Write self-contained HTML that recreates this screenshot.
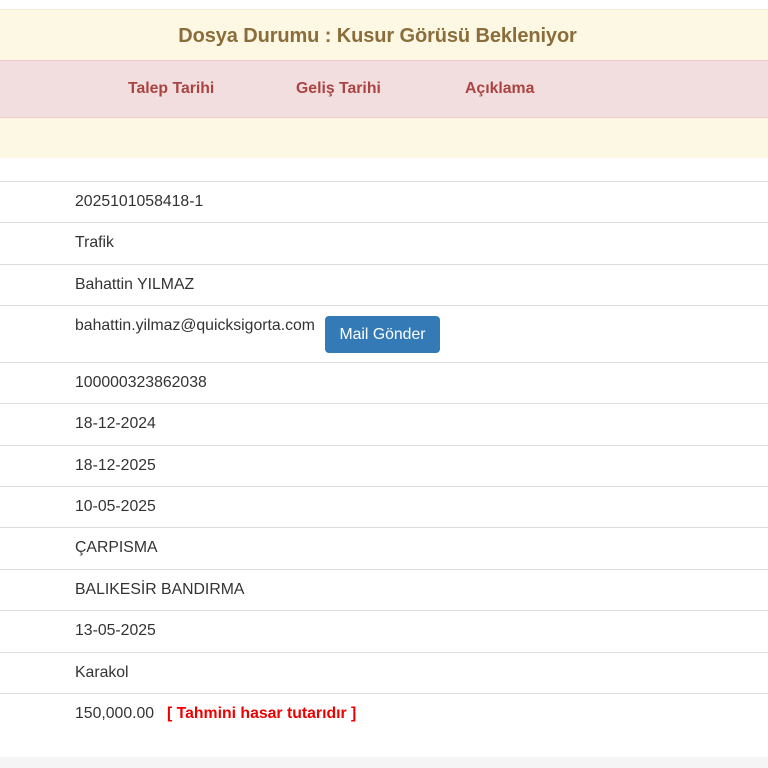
<!DOCTYPE html>
<html><head><meta charset="utf-8"><style>
body{margin:0;width:768px;height:768px;background:#fff;font-family:"Liberation Sans",Arial,sans-serif;position:relative;overflow:hidden;color:#333}
.a{position:absolute;left:0;width:768px}
.t{position:absolute;font-size:15.8px;white-space:nowrap}
.line{position:absolute;left:0;width:768px;height:1px;background:#ddd}
</style></head><body>
<div class="a" style="top:9px;height:51px;background:#fcf8e3;border-top:1px solid #f5eedc;box-sizing:border-box"></div>
<div class="t" style="left:0;width:755px;text-align:center;top:25px;font-size:20px;letter-spacing:-0.1px;font-weight:bold;color:#8a6d3b">Dosya Durumu : Kusur Görüsü Bekleniyor</div>
<div class="a" style="top:60px;height:58px;background:#f2dede;border-top:1px solid #ebccd1;border-bottom:1px solid #ebccd1;box-sizing:border-box"></div>
<div class="t" style="left:128px;top:80px;font-weight:bold;color:#a94442">Talep Tarihi</div>
<div class="t" style="left:296px;top:80px;font-weight:bold;color:#a94442">Geliş Tarihi</div>
<div class="t" style="left:465px;top:80px;font-weight:bold;color:#a94442">Açıklama</div>
<div class="a" style="top:118px;height:40px;background:#fcf8e3"></div>
<div class="line" style="top:181px"></div>
<div class="line" style="top:222px"></div>
<div class="line" style="top:264px"></div>
<div class="line" style="top:305px"></div>
<div class="line" style="top:362px"></div>
<div class="line" style="top:403px"></div>
<div class="line" style="top:445px"></div>
<div class="line" style="top:486px"></div>
<div class="line" style="top:527px"></div>
<div class="line" style="top:569px"></div>
<div class="line" style="top:610px"></div>
<div class="line" style="top:652px"></div>
<div class="line" style="top:693px"></div>
<div class="t" style="left:75px;top:193px">2025101058418-1</div>
<div class="t" style="left:75px;top:234px">Trafik</div>
<div class="t" style="left:75px;top:276px">Bahattin YILMAZ</div>
<div class="t" style="left:75px;top:317px">bahattin.yilmaz@quicksigorta.com</div>
<div style="position:absolute;left:325px;top:316px;width:115px;height:37px;background:#337ab7;border-radius:4px;color:#fff;font-size:15.8px;line-height:37px;text-align:center">Mail Gönder</div>
<div class="t" style="left:75px;top:374px">100000323862038</div>
<div class="t" style="left:75px;top:415px">18-12-2024</div>
<div class="t" style="left:75px;top:457px">18-12-2025</div>
<div class="t" style="left:75px;top:498px">10-05-2025</div>
<div class="t" style="left:75px;top:539px">ÇARPISMA</div>
<div class="t" style="left:75px;top:581px">BALIKESİR BANDIRMA</div>
<div class="t" style="left:75px;top:622px">13-05-2025</div>
<div class="t" style="left:75px;top:664px">Karakol</div>
<div class="t" style="left:75px;top:705px">150,000.00</div>
<div class="t" style="left:167px;top:705px;font-weight:bold;color:#e00">[ Tahmini hasar tutarıdır ]</div>
<div class="a" style="top:757px;height:11px;background:#f5f5f5"></div>
</body></html>
